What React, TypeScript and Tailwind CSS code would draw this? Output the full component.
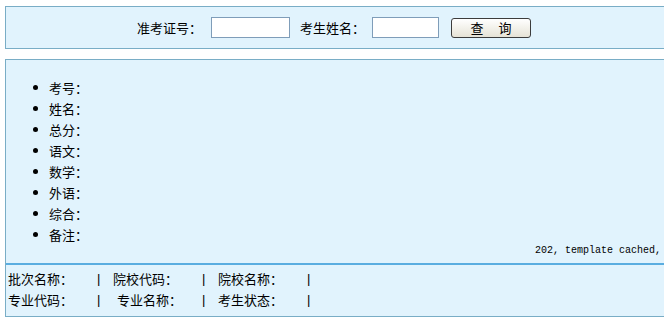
import React from 'react';

const fields = ['考号：', '姓名：', '总分：', '语文：', '数学：', '外语：', '综合：', '备注：'];

const Pipe = ({ w }: { w: string }) => (
  <span className={`${w} shrink-0 text-black font-['Liberation_Sans',sans-serif]`}>|</span>
);

export default function App() {
  return (
    <div className="w-[664px] h-[317px] overflow-hidden bg-white text-black text-[13px] font-['Noto_Sans_CJK_SC',sans-serif]">
      {/* search bar */}
      <div className="ml-[5px] mt-[6px] w-[680px] h-[43px] border border-[#79adc6] bg-[#e1f3fd] flex items-center pl-[131px]">
        <span className="leading-[21px]">准考证号：</span>
        <input className="ml-[9px] w-[79px] h-[21px] border border-[#7f9db9] bg-white outline-none" />
        <span className="ml-[10px] leading-[21px]">考生姓名：</span>
        <input className="ml-[7px] w-[67px] h-[21px] border border-[#7f9db9] bg-white outline-none" />
        <button className="ml-[12px] w-[80px] h-[20px] rounded-[3px] border border-[#3c3c3c] bg-gradient-to-b from-white to-[#e6e3d6] flex items-center justify-center gap-[15px] leading-none">
          <span>查</span>
          <span>询</span>
        </button>
      </div>

      {/* result */}
      <div className="ml-[5px] mt-[10px] w-[680px] border border-[#79adc6] bg-[#e1f3fd]">
        <div className="pt-[17px] pb-[6px]">
          <ul>
            {fields.map((f) => (
              <li key={f} className="flex items-center h-[21px] pl-[27px]">
                <span className="w-[5px] h-[5px] rounded-full bg-black shrink-0" />
                <span className="ml-[11px]">{f}</span>
              </li>
            ))}
          </ul>
          <div className="pl-[529px] h-[12px] leading-[12px] whitespace-nowrap text-[10px] font-['Liberation_Mono',monospace]">
            202, template cached,
          </div>
        </div>
        <div className="h-[2px] bg-[#5aade0]" />
        <div className="pt-[3px] pb-[6px] pl-[2px]">
          <div className="flex h-[21px] items-center whitespace-nowrap">
            <span className="w-[89px] shrink-0">批次名称：</span>
            <Pipe w="w-[16px]" />
            <span className="w-[89px] shrink-0">院校代码：</span>
            <Pipe w="w-[16px]" />
            <span className="w-[89px] shrink-0">院校名称：</span>
            <Pipe w="w-[16px]" />
          </div>
          <div className="flex h-[21px] items-center whitespace-nowrap">
            <span className="w-[89px] shrink-0">专业代码：</span>
            <Pipe w="w-[20px]" />
            <span className="w-[85px] shrink-0">专业名称：</span>
            <Pipe w="w-[16px]" />
            <span className="w-[89px] shrink-0">考生状态：</span>
            <Pipe w="w-[16px]" />
          </div>
        </div>
      </div>
    </div>
  );
}
